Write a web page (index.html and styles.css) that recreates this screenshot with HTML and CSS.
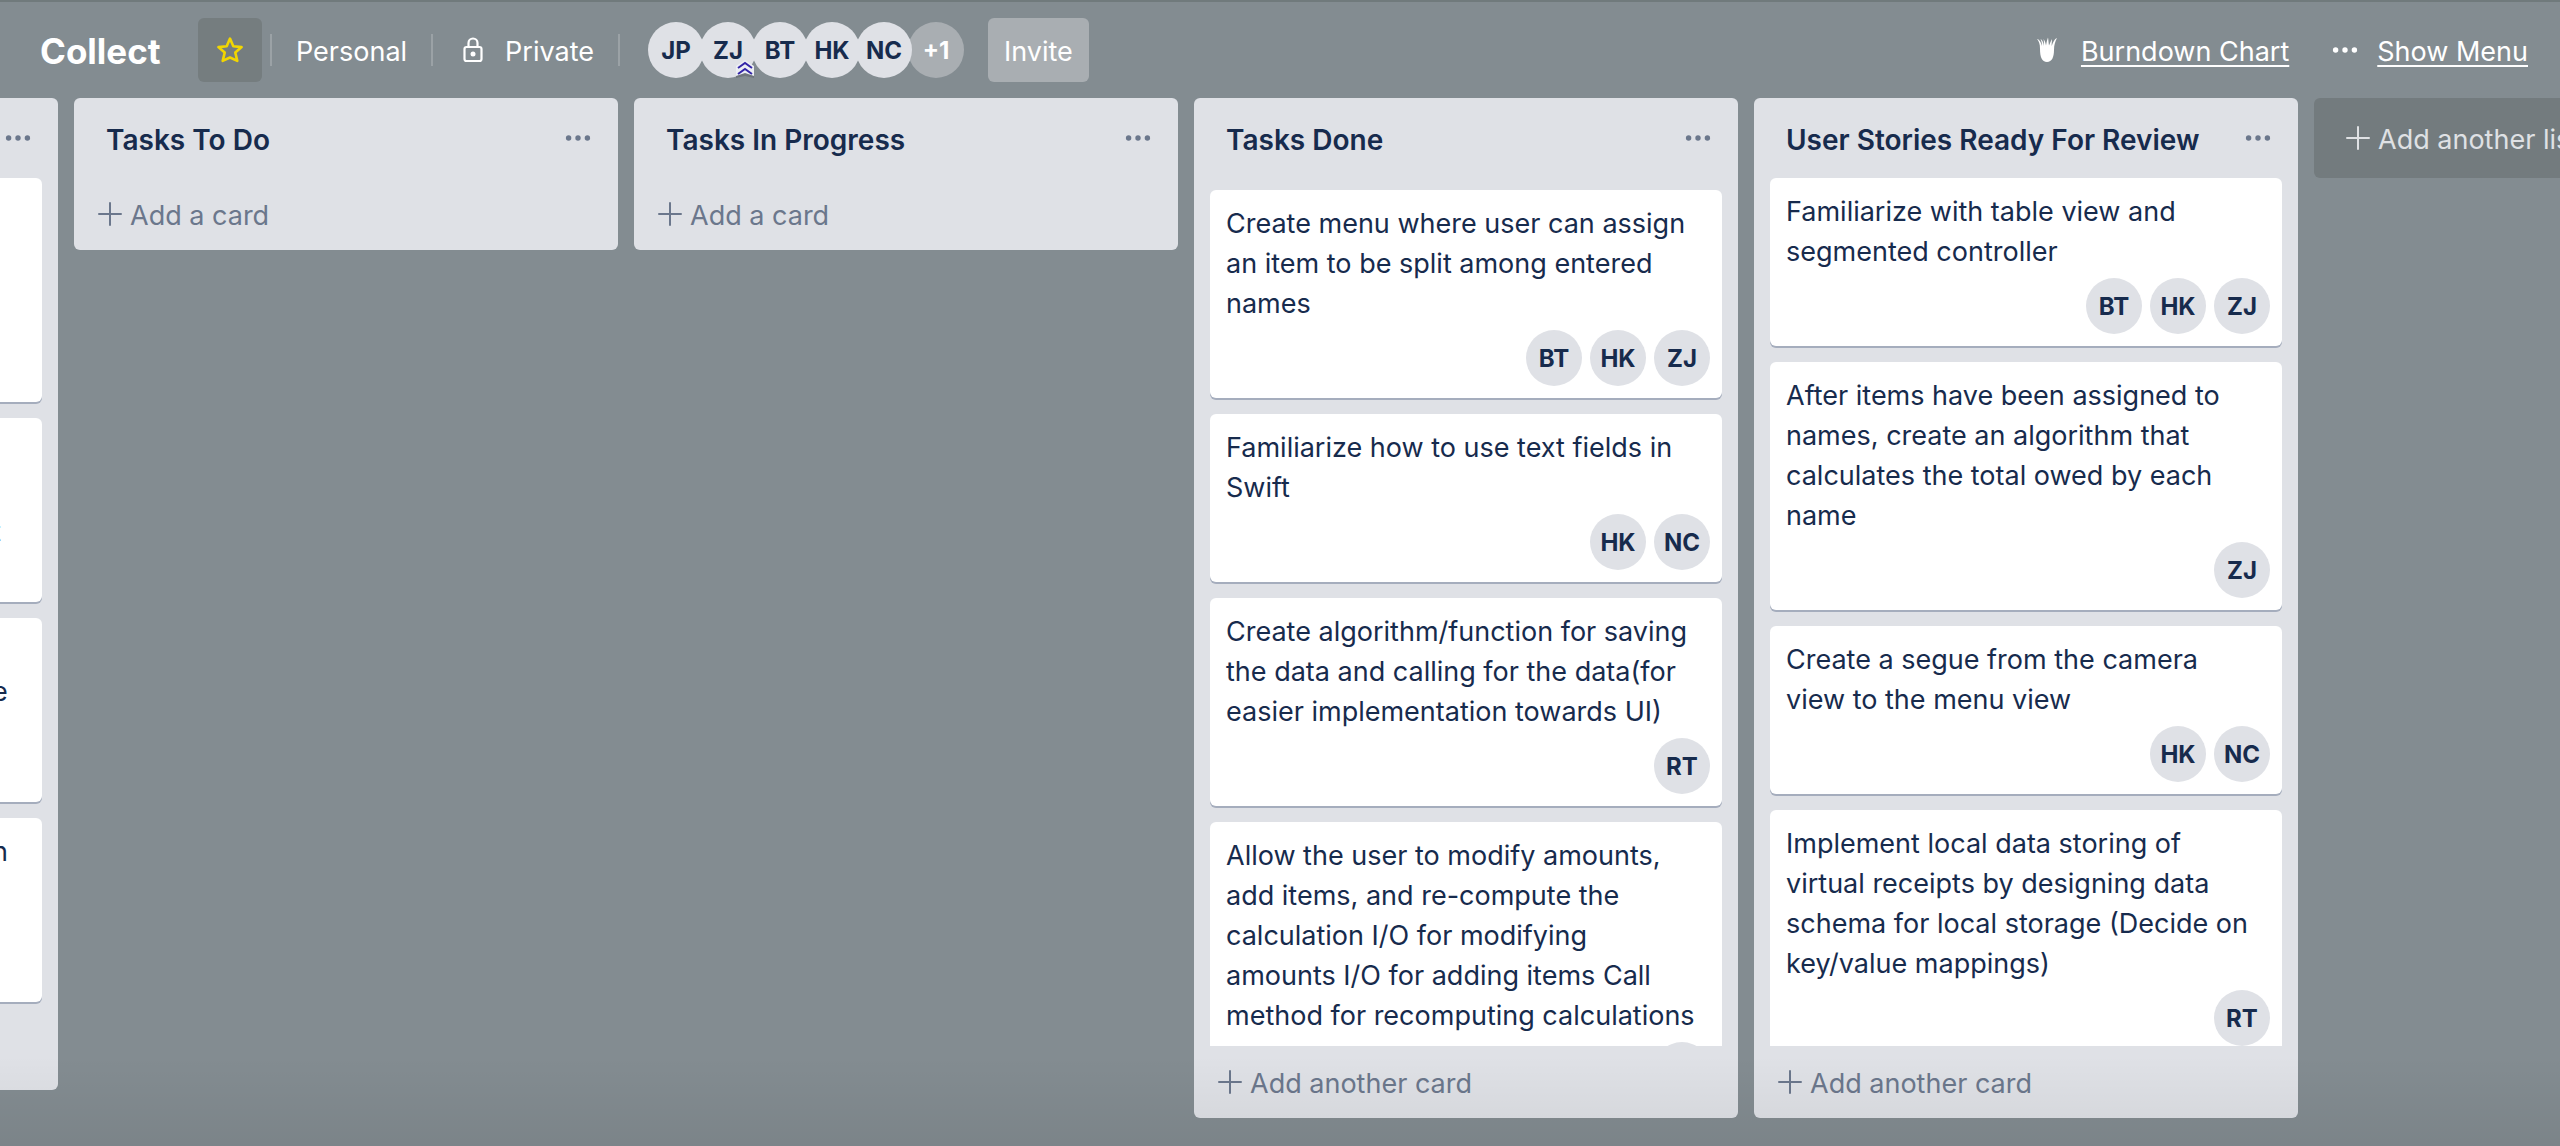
FILE: index.html
```html
<!DOCTYPE html>
<html lang="en">
<head>
<meta charset="utf-8">
<title>Collect</title>
<link rel="stylesheet" href="styles.css">
</head>
<body>
<svg class="defs" aria-hidden="true">
  <symbol id="dots" viewBox="0 0 32 32"><circle cx="6.600" cy="16" r="2.700"/><circle cx="16" cy="16" r="2.700"/><circle cx="25.400" cy="16" r="2.700"/></symbol>
  <symbol id="plus" viewBox="0 0 24 24"><path d="M12 1v22M1 12h22" fill="none" stroke="currentColor" stroke-width="2" stroke-linecap="round"/></symbol>
</svg>
<header class="topbar">
  <h1 class="board-name">Collect</h1>
  <button class="star" aria-label="Star board"><svg viewBox="0 0 28 28"><path d="M14 2.600l3.300 7.700 8.300.8-6.300 5.500 2 8.300L14 21.500l-7.300 3.400 2-8.300-6.300-5.500 8.300-.8z" fill="none" stroke="currentColor" stroke-width="2.600" stroke-linejoin="round"/></svg></button>
  <span class="rule"></span>
  <button class="plain"><span class="label">Personal</span></button>
  <span class="rule"></span>
  <button class="plain"><svg class="lock" viewBox="0 0 20 26"><g fill="none" stroke="currentColor" stroke-width="2.200"><rect x="1.500" y="10" width="17" height="14" rx="2"/><path d="M5.500 10V6a4.500 4.500 0 0 1 9 0V10"/></g><circle cx="10" cy="17" r="2.500" fill="currentColor"/></svg><span class="label">Private</span></button>
  <span class="rule"></span>
  <div class="members">
    <span class="avatar">JP</span>
    <span class="avatar">ZJ<svg class="rank" viewBox="0 0 18 18"><path d="M0 12l0 6 9-2 9 2v-6z" fill="#6f757c"/><path d="M0 6L9 0l9 6v10l-9-3-9 3z" fill="#eceef4"/><path d="M2 8l7-5 7 5M2 14l7-5 7 5" fill="none" stroke="#3426a8" stroke-width="2"/></svg></span>
    <span class="avatar">BT</span>
    <span class="avatar">HK</span>
    <span class="avatar">NC</span>
    <button class="avatar more">+1</button>
  </div>
  <button class="invite"><span class="label">Invite</span></button>
  <nav class="links">
    <a href="#chart"><svg class="flame" viewBox="0 0 20 26"><path d="M3 12C3 7 2 4 0 2c2 0 4 3 5 7C5 6 4.500 4 3.500 2 5.500 3 6.500 6 7 9 7 6 7 4 6.500 2 8 4 8.500 6 9 8.500 9.500 6 10 3 11 .5c.5 3 .5 5 1 8C13 6 14 4 15 2c0 2-.5 5-.3 7C16 5 17.500 2 20 1c-2 4-3 7-3 12 0 7-2 12-7 12S3 20 3 12z" fill="currentColor"/></svg><span class="label">Burndown Chart</span></a>
    <a href="#menu"><svg class="dots"><use href="#dots"/></svg><span class="label">Show Menu</span></a>
  </nav>
</header>
<main class="board">
  <section class="list clipped">
    <div class="list-head"><h2></h2><button class="dots-button" aria-label="List actions"><svg class="dots"><use href="#dots"/></svg></button></div>
    <div class="cards">
      <article class="card tall"></article>
      <article class="card third"><p>t</p></article>
      <article class="card second"><p>e</p></article>
      <article class="card"><p>n</p></article>
    </div>
  </section>
  <section class="list">
    <div class="list-head"><h2 class="label">Tasks To Do</h2><button class="dots-button" aria-label="List actions"><svg class="dots"><use href="#dots"/></svg></button></div>
    <button class="add"><svg class="plus"><use href="#plus"/></svg><span class="label">Add a card</span></button>
  </section>
  <section class="list">
    <div class="list-head"><h2 class="label">Tasks In Progress</h2><button class="dots-button" aria-label="List actions"><svg class="dots"><use href="#dots"/></svg></button></div>
    <button class="add"><svg class="plus"><use href="#plus"/></svg><span class="label">Add a card</span></button>
  </section>
  <section class="list">
    <div class="list-head"><h2 class="label">Tasks Done</h2><button class="dots-button" aria-label="List actions"><svg class="dots"><use href="#dots"/></svg></button></div>
    <div class="cards inset">
      <article class="card"><p>Create menu where user can assign an item to be split among entered names</p><div class="people"><span class="avatar">BT</span><span class="avatar">HK</span><span class="avatar">ZJ</span></div></article>
      <article class="card"><p>Familiarize how to use text fields in Swift</p><div class="people"><span class="avatar">HK</span><span class="avatar">NC</span></div></article>
      <article class="card"><p>Create algorithm/function for saving the data and calling for the data(for easier implementation towards UI)</p><div class="people"><span class="avatar">RT</span></div></article>
      <article class="card"><p>Allow the user to modify amounts, add items, and re-compute the calculation I/O for modifying amounts I/O for adding items Call method for recomputing calculations</p><div class="people"><span class="avatar"></span></div></article>
    </div>
    <button class="add"><svg class="plus"><use href="#plus"/></svg><span class="label">Add another card</span></button>
  </section>
  <section class="list">
    <div class="list-head"><h2 class="label">User Stories Ready For Review</h2><button class="dots-button" aria-label="List actions"><svg class="dots"><use href="#dots"/></svg></button></div>
    <div class="cards">
      <article class="card"><p>Familiarize with table view and segmented controller</p><div class="people"><span class="avatar">BT</span><span class="avatar">HK</span><span class="avatar">ZJ</span></div></article>
      <article class="card"><p>After items have been assigned to names, create an algorithm that calculates the total owed by each name</p><div class="people"><span class="avatar">ZJ</span></div></article>
      <article class="card"><p>Create a segue from the camera view to the menu view</p><div class="people"><span class="avatar">HK</span><span class="avatar">NC</span></div></article>
      <article class="card"><p>Implement local data storing of virtual receipts by designing data schema for local storage (Decide on key/value mappings)</p><div class="people"><span class="avatar">RT</span></div></article>
    </div>
    <button class="add"><svg class="plus"><use href="#plus"/></svg><span class="label">Add another card</span></button>
  </section>
  <button class="add-list"><svg class="plus"><use href="#plus"/></svg><span class="label">Add another list</span></button>
</main>
</body>
</html>
```
FILE: styles.css
```css
* { box-sizing: border-box; }
body {
  margin: 0;
  height: 100vh;
  display: flex;
  flex-direction: column;
  overflow: hidden;
  background: #838c91;
  color: #172b4d;
  font: 27px/40px Inter, "Liberation Sans", sans-serif;
}
body::after {
  content: "";
  position: absolute;
  inset: auto 0 0;
  height: 90px;
  background: linear-gradient(transparent, rgba(0, 0, 0, .06));
  pointer-events: none;
}
h1, h2, p { margin: 0; }
button {
  border: 0;
  margin: 0;
  padding: 0;
  background: none;
  color: inherit;
  font: inherit;
  white-space: nowrap;
  cursor: pointer;
}
svg { display: block; flex: none; }
.defs { position: absolute; width: 0; height: 0; }
.dots { width: 32px; height: 32px; fill: currentColor; }
.plus { width: 24px; height: 24px; }
.label { display: block; padding-top: 3px; }

.topbar {
  flex: none;
  display: flex;
  align-items: center;
  height: 98px;
  padding: 0 32px 0 40px;
  border-top: 2px solid #707a7c;
  color: #fff;
}
.board-name { width: 158px; padding-top: 2px; font-size: 35px; font-weight: 700; }
.star {
  display: grid;
  place-items: center;
  width: 64px;
  height: 64px;
  margin-right: 8px;
  border-radius: 6px;
  background: #757d7f;
  color: #f2d600;
}
.star svg { width: 28px; height: 28px; }
.rule { width: 2px; height: 32px; background: #9ba2a6; }
.plain { display: flex; align-items: center; gap: 22px; height: 64px; padding: 0 24px; }
.plain:has(svg) { padding-left: 30px; }
.lock { width: 20px; height: 26px; }
.members { display: flex; margin: 0 24px 0 28px; }
.members .avatar { margin-right: -4px; position: relative; }
.members .avatar:nth-child(1) { z-index: 6; }
.members .avatar:nth-child(2) { z-index: 7; }
.members .avatar:nth-child(3) { z-index: 4; }
.members .avatar:nth-child(4) { z-index: 3; }
.members .avatar:nth-child(5) { z-index: 2; }
.members .more { margin-right: 0; background: #a9aeb2; color: #fff; }
.rank { position: absolute; right: 2px; bottom: 0; width: 18px; height: 18px; }
.avatar {
  display: grid;
  place-items: center;
  width: 56px;
  height: 56px;
  padding-top: 2px;
  border-radius: 50%;
  background: #dfe1e6;
  color: #172b4d;
  font-size: 24px;
  font-weight: 700;
}
.invite { height: 64px; padding: 0 16px; border-radius: 6px; background: #a9aeb2; }
.links { display: flex; gap: 40px; margin-left: auto; }
.links a { display: flex; align-items: center; gap: 16px; color: inherit; text-decoration: none; white-space: nowrap; }
.links .label { text-decoration: underline; text-decoration-thickness: 2px; text-underline-offset: 4px; }
.flame { width: 20px; height: 26px; margin-right: 8px; }

.board {
  flex: 1;
  min-height: 0;
  display: flex;
  align-items: flex-start;
  gap: 16px;
  padding-bottom: 28px;
  overflow: hidden;
}
.list {
  flex: none;
  display: flex;
  flex-direction: column;
  width: 544px;
  max-height: 100%;
  border-radius: 6px;
  background: #dfe1e6;
}
.list-head { flex: none; display: flex; align-items: center; justify-content: space-between; height: 80px; padding: 0 24px 0 32px; }
.list-head h2 { font-size: 28px; font-weight: 600; white-space: nowrap; }
.dots-button { color: #6b778c; }
.cards { flex: 1; min-height: 0; overflow: hidden; padding: 0 16px; }
.inset { padding-top: 12px; }
.card { margin-bottom: 16px; padding: 14px 16px 12px; border-radius: 6px; background: #fff; box-shadow: 0 2px 0 #a5adbd; }
.card p { padding-right: 4px; }
.people { display: flex; justify-content: flex-end; gap: 8px; margin: 6px -4px 0 0; }
.add { flex: none; display: flex; align-items: center; gap: 8px; height: 72px; padding: 0 24px; color: #6b778c; }

/* The first list is scrolled almost out of the board's left edge. */
.clipped { width: 74px; margin-left: -16px; padding-bottom: 72px; }
.clipped .list-head { padding-left: 0; }
.clipped .cards { padding-left: 8px; }
.clipped .card { height: 184px; padding-left: 0; }
.clipped .tall { height: 224px; }
.clipped .second { padding-top: 54px; }
.clipped .third { padding-top: 94px; }

.add-list {
  flex: none;
  display: flex;
  align-items: center;
  gap: 8px;
  width: 544px;
  height: 80px;
  padding: 0 32px;
  border-radius: 6px;
  background: #737b7e;
  color: #dfe1e4;
}
```
